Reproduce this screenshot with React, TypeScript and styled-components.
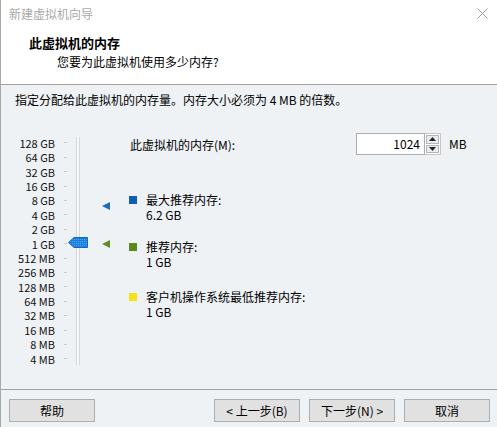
import React from 'react';
import styled, { createGlobalStyle } from 'styled-components';

const FONT = `"Noto Sans CJK SC", "Noto Sans", "Liberation Sans", sans-serif`;

const Global = createGlobalStyle`
  html, body { margin: 0; padding: 0; background: #ffffff; }
  body { font-family: ${FONT}; }
  * { box-sizing: border-box; }
`;

const ROW_H = 14.4;
const SCALE_TOP = 2.8; // offset of first row inside Main
const MAIN_TOP_ABS = 133;
const TRACK_TOP = 4;

const labels = ['128 GB', '64 GB', '32 GB', '16 GB', '8 GB', '4 GB', '2 GB', '1 GB', '512 MB', '256 MB', '128 MB', '64 MB', '32 MB', '16 MB', '8 MB', '4 MB'];

// centre (relative to Main top) of a memory value given in MB
const centerFor = (mb: number) => SCALE_TOP + (Math.log2(131072 / mb) + 0.5) * ROW_H;

const Window = styled.div`
  width: 497px;
  height: 427px;
  display: flex;
  flex-direction: column;
  border-left: 1px solid #a9a9a9;
  font-family: ${FONT};
  font-size: 12px;
  color: #000;
`;

const TitleBar = styled.div`
  height: 28px;
  display: flex;
  align-items: center;
  justify-content: space-between;
  padding: 0 9px 2px 8px;
  background: #fff;
  color: #a9a9a9;
  font-size: 12px;
`;

const CloseIcon = () => (
  <svg width="11" height="11" viewBox="0 0 11 11">
    <path d="M0.5 0.5 L10.5 10.5 M10.5 0.5 L0.5 10.5" stroke="#9c9c9c" strokeWidth="1" fill="none" />
  </svg>
);

const Header = styled.div`
  height: 57px;
  background: #fff;
  border-bottom: 1px solid #a3a3a3;
  padding: 7px 0 0 28px;
`;

const HeaderTitle = styled.div`
  font-weight: bold;
  font-size: 13px;
  line-height: 16px;
`;

const HeaderSub = styled.div`
  margin: 3px 0 0 28px;
  line-height: 16px;
`;

const Body = styled.div`
  flex: 1;
  background: #eef2f5;
  padding: 7px 0 0 14px;
  display: flex;
  flex-direction: column;
`;

const Intro = styled.div`
  line-height: 16px;
`;

const Main = styled.div`
  display: flex;
  margin-top: ${MAIN_TOP_ABS - 85 - 7 - 16}px;
`;

const Scale = styled.div`
  display: flex;
  flex-direction: column;
  padding-top: ${SCALE_TOP}px;
`;

const ScaleRow = styled.div`
  display: flex;
  align-items: center;
  height: ${ROW_H}px;
`;

const ScaleLabel = styled.span`
  width: 40px;
  text-align: right;
  font-size: 11px;
  line-height: ${ROW_H}px;
  color: #111;
  white-space: nowrap;
`;

const Tick = styled.span`
  width: 3px;
  height: 1px;
  margin-left: 9px;
  background: #c9ccd0;
`;

const Track = styled.div`
  position: relative;
  width: 4px;
  height: 228px;
  margin: ${TRACK_TOP}px 0 0 9px;
  border-left: 1px solid #d3d7db;
  border-right: 1px solid #d3d7db;
  background: #f7f8fa;
`;

const Thumb = styled.svg`
  position: absolute;
  left: -9px;
  width: 20px;
  height: 11px;
`;

const Markers = styled.div`
  position: relative;
  width: 50px;
`;

const Marker = styled.svg`
  position: absolute;
  left: 22px;
  width: 8px;
  height: 8px;
`;

const Content = styled.div`
  display: flex;
  flex-direction: column;
`;

const MemRow = styled.div`
  display: flex;
  align-items: center;
  height: 22px;
`;

const MemLabel = styled.span`
  width: 226px;
  line-height: 16px;
  padding-top: 2px;
`;

const Spinner = styled.div`
  display: flex;
  height: 22px;
`;

const NumberBox = styled.div`
  width: 69px;
  height: 22px;
  border: 1px solid #abadb3;
  background: #fff;
  text-align: right;
  padding-right: 4px;
  line-height: 20px;
  font-size: 12px;
`;

const SpinButtons = styled.div`
  width: 16px;
  display: flex;
  flex-direction: column;
  border: 1px solid #c4c6ca;
  border-left: none;
  background: #fff;
  padding: 1px;
  gap: 1px;
`;

const SpinBtn = styled.div`
  flex: 1;
  border: 1px solid #b3b5b9;
  background: #ececec;
  display: flex;
  align-items: center;
  justify-content: center;
`;

const Unit = styled.span`
  margin-left: 8px;
  line-height: 16px;
`;

const Legend = styled.div<{ $mt: number }>`
  display: flex;
  margin-top: ${p => p.$mt}px;
  margin-left: -1px;
`;

const Swatch = styled.span<{ $c: string }>`
  width: 8px;
  height: 8px;
  margin-top: 4px;
  margin-right: 9px;
  background: ${p => p.$c};
  flex: none;
`;

const LegendText = styled.div`
  line-height: 15px;
`;

const Footer = styled.div`
  height: 38px;
  border-top: 1px solid #a3a3a3;
  background: #eef2f5;
  display: flex;
  padding: 9px 7px 0 8px;
  gap: 9px;
`;

const Spacer = styled.div`
  flex: 1;
`;

const Button = styled.button`
  width: 86px;
  height: 23px;
  border: 1px solid #adadad;
  background: #e1e1e1;
  font-family: ${FONT};
  font-size: 12px;
  color: #000;
  padding: 0;
  line-height: 21px;
`;

const Tri = ({ up }: { up: boolean }) => (
  <svg width="7" height="4" viewBox="0 0 7 4">
    <path d={up ? 'M0 4 L3.5 0 L7 4 Z' : 'M0 0 L3.5 4 L7 0 Z'} fill="#222" />
  </svg>
);

const items = [
  { color: '#0f60ad', label: '最大推荐内存:', value: '6.2 GB', mt: 37 },
  { color: '#5b8a1c', label: '推荐内存:', value: '1 GB', mt: 17 },
  { color: '#f7e21a', label: '客户机操作系统最低推荐内存:', value: '1 GB', mt: 20 },
];

export default function App() {
  const thumbTop = centerFor(1024) - TRACK_TOP - 5.5 - 1;
  const maxTop = centerFor(6348.8) - 4;
  const recTop = centerFor(1024) - 4;
  return (
    <>
      <Global />
      <Window>
        <TitleBar>
          <span>新建虚拟机向导</span>
          <CloseIcon />
        </TitleBar>
        <Header>
          <HeaderTitle>此虚拟机的内存</HeaderTitle>
          <HeaderSub>您要为此虚拟机使用多少内存?</HeaderSub>
        </Header>
        <Body>
          <Intro>指定分配给此虚拟机的内存量。内存大小必须为 4 MB 的倍数。</Intro>
          <Main>
            <Scale>
              {labels.map(l => (
                <ScaleRow key={l}>
                  <ScaleLabel>{l}</ScaleLabel>
                  <Tick />
                </ScaleRow>
              ))}
            </Scale>
            <Track>
              <Thumb viewBox="0 0 20 11" style={{ top: thumbTop }}>
                <defs>
                  <pattern id="dots" width="2" height="2" patternUnits="userSpaceOnUse">
                    <rect width="2" height="2" fill="#1b7fe0" />
                    <rect width="1" height="1" fill="#4fa3f0" />
                  </pattern>
                </defs>
                <path d="M0.5 5.5 L6 0.5 L19.5 0.5 L19.5 10.5 L6 10.5 Z" fill="url(#dots)" stroke="#1468c2" strokeWidth="1" />
              </Thumb>
            </Track>
            <Markers>
              <Marker viewBox="0 0 8 8" style={{ top: maxTop }}>
                <path d="M0 4 L8 0 L8 8 Z" fill="#1a6db8" />
              </Marker>
              <Marker viewBox="0 0 8 8" style={{ top: recTop }}>
                <path d="M0 4 L8 0 L8 8 Z" fill="#5f8f22" />
              </Marker>
            </Markers>
            <Content>
              <MemRow>
                <MemLabel>此虚拟机的内存(M):</MemLabel>
                <Spinner>
                  <NumberBox>1024</NumberBox>
                  <SpinButtons>
                    <SpinBtn><Tri up /></SpinBtn>
                    <SpinBtn><Tri up={false} /></SpinBtn>
                  </SpinButtons>
                </Spinner>
                <Unit>MB</Unit>
              </MemRow>
              {items.map(it => (
                <Legend key={it.label} $mt={it.mt}>
                  <Swatch $c={it.color} />
                  <LegendText>
                    <div>{it.label}</div>
                    <div>{it.value}</div>
                  </LegendText>
                </Legend>
              ))}
            </Content>
          </Main>
        </Body>
        <Footer>
          <Button>帮助</Button>
          <Spacer />
          <Button>&lt; 上一步(B)</Button>
          <Button>下一步(N) &gt;</Button>
          <Button>取消</Button>
        </Footer>
      </Window>
    </>
  );
}
